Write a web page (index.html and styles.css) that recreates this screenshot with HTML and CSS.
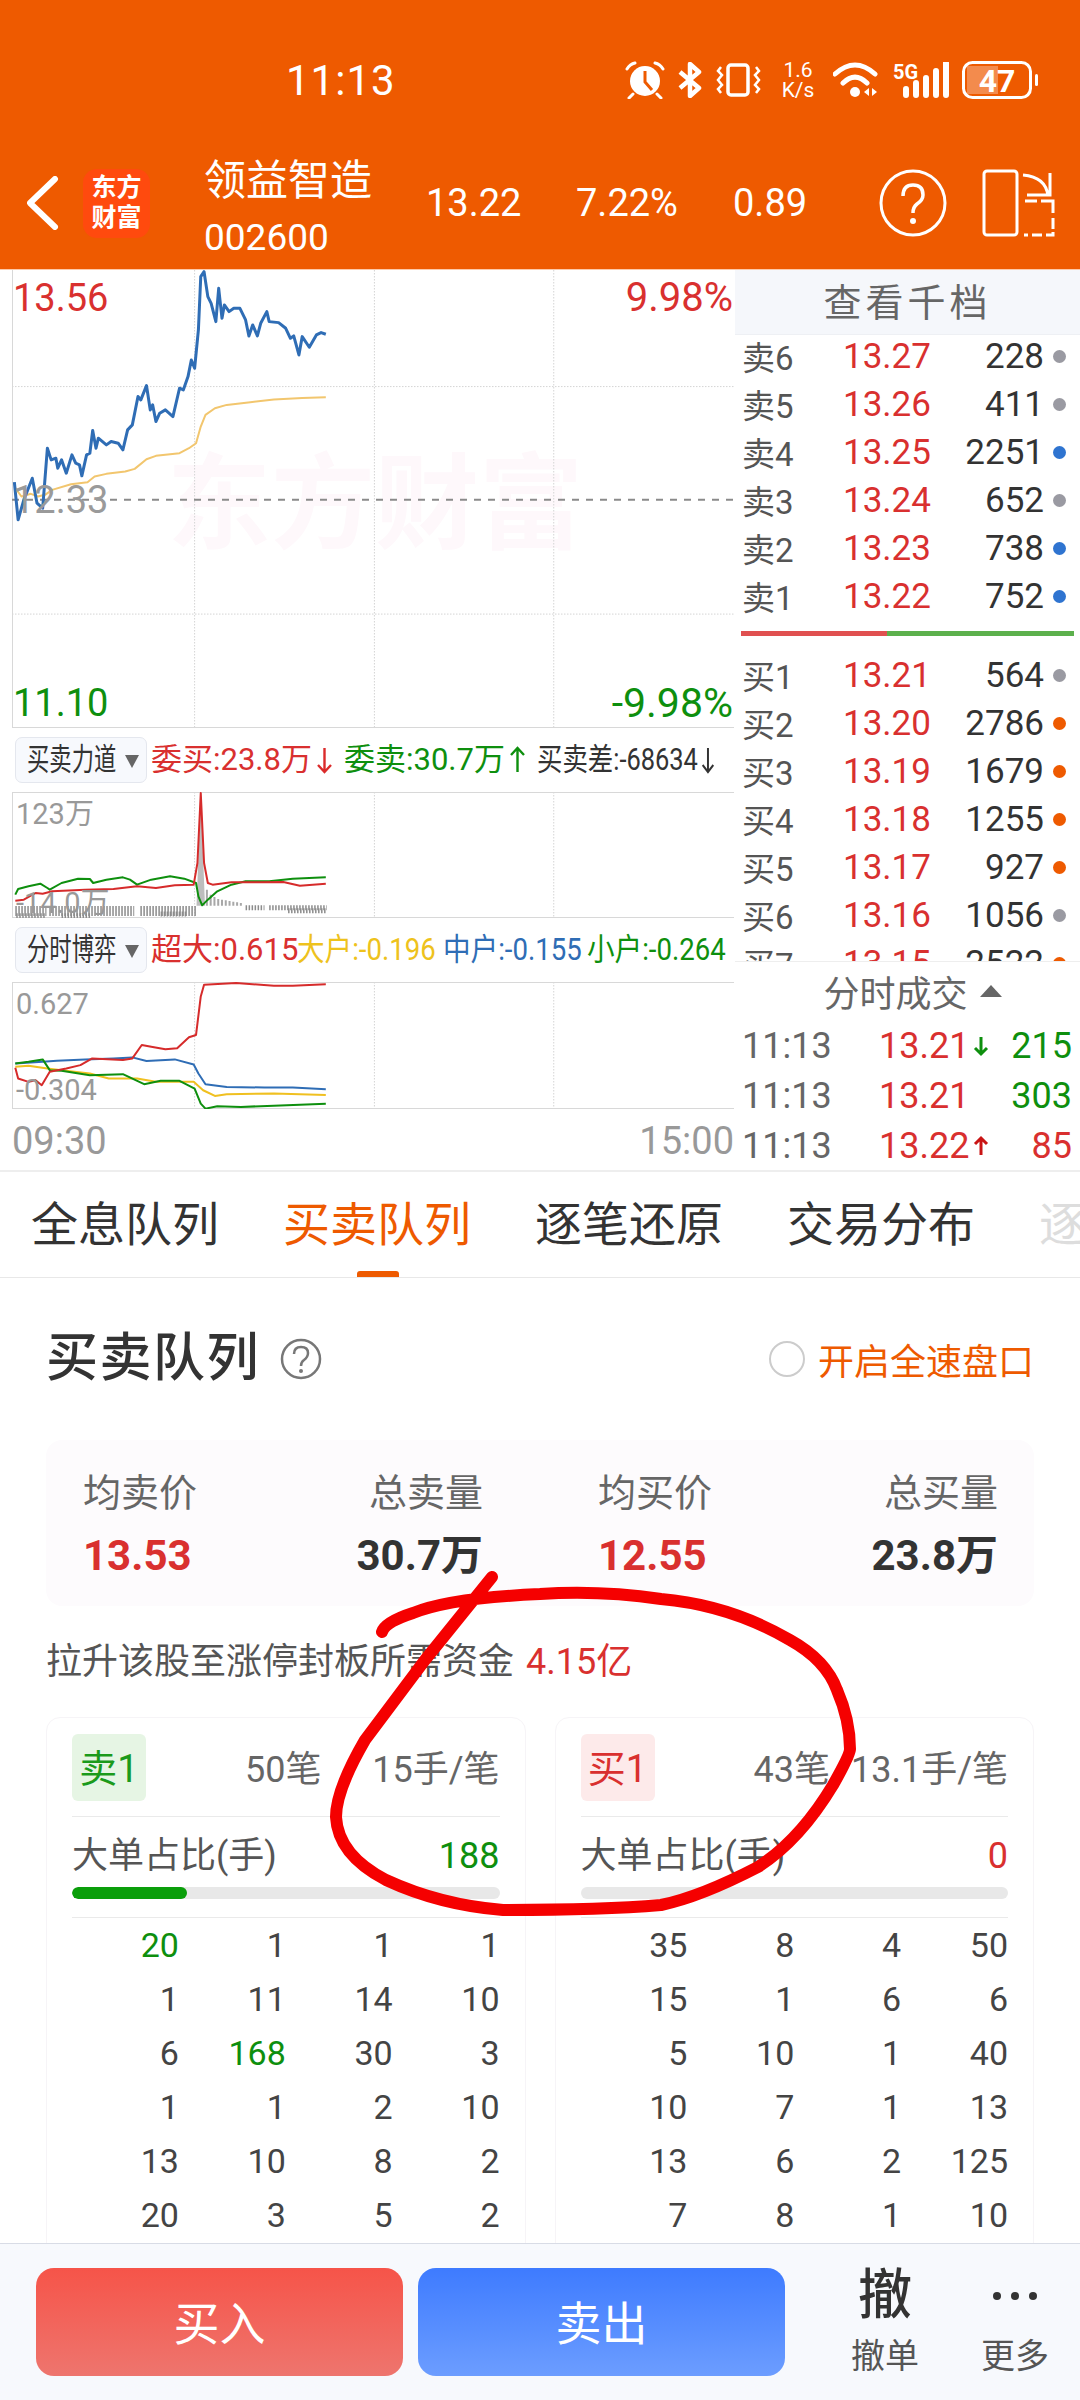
FILE: index.html
```html
<!DOCTYPE html>
<html lang="zh">
<head>
<meta charset="utf-8">
<title>领益智造</title>
<link rel="stylesheet" href="styles.css">
</head>
<body>
<header class="header">
  <div class="status">
    <span class="clock">11:13</span>
    <svg class="ic alarm" width="40" height="38" viewBox="0 0 40 38"><circle cx="20" cy="20" r="15" fill="#fff"/><path d="M20 10V21L27 29" fill="none" stroke="#ee5a00" stroke-width="3"/><path d="M2 8Q5 3 10 2M38 8Q35 3 30 2M8 33L4 37M32 33L36 37" fill="none" stroke="#fff" stroke-width="3" stroke-linecap="round"/></svg>
    <svg class="ic bt" width="24" height="36" viewBox="0 0 24 36"><path d="M2 10L21 26L12 34V2L21 10L2 26" fill="none" stroke="#fff" stroke-width="4.5" stroke-linejoin="round"/></svg>
    <svg class="ic vib" width="45" height="36" viewBox="0 0 45 36"><rect x="12" y="3" width="20" height="30" rx="3" fill="none" stroke="#fff" stroke-width="3.5"/><path d="M5 5L2 9L6 13L2 18L6 23L2 27L5 31M40 5L43 9L39 13L43 18L39 23L43 27L40 31" fill="none" stroke="#fff" stroke-width="2.5"/></svg>
    <span class="speed"><span>1.6</span><span>K/s</span></span>
    <svg class="ic wifi" width="48" height="36" viewBox="0 0 48 36"><path d="M2 12Q22-6 42 12M10 21Q22 9 34 21" fill="none" stroke="#fff" stroke-width="5" stroke-linecap="round"/><circle cx="22" cy="30" r="5" fill="#fff"/><path d="M36 26L31 30L36 34ZM39 26L44 30L39 34Z" fill="#fff"/></svg>
    <span class="net"><span class="fiveg">5G</span>
      <svg width="46" height="36" viewBox="0 0 46 36"><path d="M3 27V33M13 21V33M23 16V33M33 9V33M43 1V33" fill="none" stroke="#fff" stroke-width="6" stroke-linecap="round"/></svg>
    </span>
    <svg class="ic batt" width="76" height="38" viewBox="0 0 76 38"><rect x="5" y="5" width="31" height="28" fill="#fff" opacity=".3"/><rect x="1.5" y="1.5" width="67" height="35" rx="9" fill="none" stroke="#fff" stroke-width="3"/><rect x="73" y="13" width="3" height="12" rx="1.5" fill="#fff"/><text x="35" y="31" text-anchor="middle" class="batt-text">47</text></svg>
  </div>
  <nav class="nav">
    <svg class="back" width="32" height="54" viewBox="0 0 32 54"><path d="M28 3L3 27L28 51" fill="none" stroke="#fff" stroke-width="6" stroke-linecap="round" stroke-linejoin="round"/></svg>
    <div class="logo"><span>东方</span><span>财富</span></div>
    <div class="name-col"><div class="name">领益智造</div><div class="code">002600</div></div>
    <div class="val v1">13.22</div>
    <div class="val v2">7.22%</div>
    <div class="val v3">0.89</div>
    <svg class="help" width="68" height="68" viewBox="0 0 68 68"><circle cx="34" cy="34" r="32" fill="none" stroke="#fff" stroke-width="3"/><path d="M24 27Q24 16 34 16Q44 16 44 26Q44 31 38 35Q34 38 34 44" fill="none" stroke="#fff" stroke-width="3.5"/><circle cx="34" cy="52" r="3" fill="#fff"/></svg>
    <svg class="rotate" width="74" height="68" viewBox="0 0 74 68"><rect x="2" y="2" width="33" height="64" rx="3" fill="none" stroke="#fff" stroke-width="3"/><path d="M43 32H55M59 32H71V44M71 49V60M71 63V66H64M60 66H50M46 66H42" fill="none" stroke="#fff" stroke-width="3"/><path d="M41 6Q64 8 66 27M68 4V26H45" fill="none" stroke="#fff" stroke-width="3"/></svg>
  </nav>
</header>

<main class="main">
  <section class="quote">
    <div class="chart-col">
      <div class="price-chart">
        <svg class="plot" width="722" height="458" viewBox="25 0 1530 1375" preserveAspectRatio="none">
          <path class="grid" d="M25 350H1555M25 1033H1555M412 0V1375M793 0V1375M1173 0V1375"/>
          <path class="frame" d="M25 0V1375H1555"/>
          <path class="dash" d="M25 690H1555"/>
          <polyline class="ln org" points="32,655 45,680 65,672 80,680 95,675 110,660 150,643 185,637 200,620 225,612 265,605 285,597 310,568 330,558 380,550 400,535 415,520 425,470 435,435 455,415 480,405 530,397 580,389 640,384 690,382"/>
          <polyline class="ln blu" points="30,637 38,750 50,690 68,625 78,700 90,715 100,535 108,570 118,565 122,595 130,570 140,610 152,555 160,580 168,585 173,618 183,555 190,550 196,482 203,535 208,505 225,525 235,515 250,520 260,540 270,480 280,465 292,380 298,390 310,347 318,420 323,405 330,455 338,430 350,420 366,440 380,355 388,360 398,320 405,270 412,295 420,180 425,20 432,5 440,80 447,100 457,155 463,55 470,145 475,105 485,125 495,115 508,115 520,150 527,198 535,165 545,198 552,160 565,125 570,155 590,158 605,175 615,205 622,198 633,255 640,200 655,232 670,195 680,188 690,193"/>
        </svg>
        <div class="watermark">东方财富</div>
        <span class="lab up tl">13.56</span>
        <span class="lab up tr">9.98%</span>
        <span class="lab flat ml">12.33</span>
        <span class="lab dn bl">11.10</span>
        <span class="lab dn br">-9.98%</span>
      </div>

      <div class="legend-row">
        <div class="pick"><span class="pick-t">买卖力道</span><i class="tri"></i></div>
        <span class="lg w193 up">委买:23.8万<svg class="arr" width="17" height="30" viewBox="0 0 17 30"><path d="M8.5 3V27M2 20L8.5 27L15 20" fill="none" stroke="#db2b2b" stroke-width="2.4"/></svg></span>
        <span class="lg w193 dn">委卖:30.7万<svg class="arr" width="17" height="30" viewBox="0 0 17 30"><path d="M8.5 27V3M2 10L8.5 3L15 10" fill="none" stroke="#0e8f0e" stroke-width="2.4"/></svg></span>
        <span class="lg n84 ink">买卖差:-68634<svg class="arr" width="17" height="30" viewBox="0 0 17 30"><path d="M8.5 3V27M2 20L8.5 27L15 20" fill="none" stroke="#333" stroke-width="2.4"/></svg></span>
      </div>
      <div class="sub-chart">
        <svg class="plot" width="722" height="126" viewBox="25 187 1530 378" preserveAspectRatio="none">
          <path class="grid" d="M412 187V565M793 187V565M1173 187V565"/>
          <path class="frame" d="M1555 187H25V565H1555"/>
          <path class="bars" d="M32 544H98M104 544H284M297 544H415"/>
          <path class="bars2" d="M34 558H95M130 558H192M340 553H395M520 534H560M570 534H692M610 543H692"/>
          <path class="barv" d="M438 528V480M446 528V495M454 528V502M462 528V508M470 528V510M478 528V512M486 528V514M494 528V516M502 528V518M510 528V520"/>
          <path class="spike" d="M416 528L425 195L434 528Z"/>
          <polyline class="ln thin gre" points="32,495 38,478 60,470 85,462 100,475 105,480 130,460 165,447 190,448 197,460 225,450 260,443 275,450 290,465 320,450 360,440 390,447 415,460 420,500 428,527 440,510 460,485 490,465 520,455 570,455 620,447 690,443"/>
          <polyline class="ln thin red" points="32,513 50,510 75,490 90,492 110,485 180,480 240,478 290,470 330,475 370,467 410,465 418,400 425,190 432,400 440,460 450,465 490,458 550,458 600,457 635,468 690,462"/>
        </svg>
        <span class="axis a1">123万</span>
        <span class="axis a2">-14.0万</span>
      </div>

      <div class="legend-row">
        <div class="pick"><span class="pick-t">分时博弈</span><i class="tri"></i></div>
        <span class="lg w146 up">超大:0.615</span>
        <span class="lg w146 n90 yel">大户:-0.196</span>
        <span class="lg w144 n90 blue">中户:-0.155</span>
        <span class="lg n90 dn">小户:-0.264</span>
      </div>
      <div class="sub-chart tall">
        <svg class="plot" width="722" height="127" viewBox="25 757 1530 379" preserveAspectRatio="none">
          <path class="grid" d="M412 757V1136M793 757V1136M1173 757V1136"/>
          <path class="frame" d="M1555 757H25V1136H1555"/>
          <polyline class="ln thin yl" points="32,1010 60,1007 100,1015 130,1020 190,1030 230,1045 265,1045 290,1045 330,1055 410,1055 430,1080 455,1097 480,1092 580,1090 690,1094"/>
          <polyline class="ln thin blu" points="32,1000 90,995 120,992 180,988 240,985 280,982 310,993 370,988 410,1003 420,1030 435,1062 480,1070 560,1072 620,1072 690,1077"/>
          <polyline class="ln thin gre" points="32,1000 60,995 90,988 105,1020 130,1022 190,1035 260,1032 305,1062 340,1052 380,1052 412,1075 425,1120 435,1135 460,1128 510,1130 580,1126 690,1120"/>
          <polyline class="ln thin red" points="32,1013 38,1045 60,1055 75,1050 88,1065 105,1025 140,1015 170,1005 195,985 260,990 280,985 300,945 320,950 350,958 375,955 400,922 415,915 425,800 432,765 500,760 580,768 620,768 690,764"/>
        </svg>
        <span class="axis a3">0.627</span>
        <span class="axis a4">-0.304</span>
      </div>
      <div class="times"><span>09:30</span><span>15:00</span></div>
    </div>

    <aside class="book">
      <div class="band">查看千档</div>
      <div class="side sell">
        <div class="row"><span class="lv">卖6</span><span class="pr">13.27</span><span class="qty">228</span><i class="dot g"></i></div>
        <div class="row"><span class="lv">卖5</span><span class="pr">13.26</span><span class="qty">411</span><i class="dot g"></i></div>
        <div class="row"><span class="lv">卖4</span><span class="pr">13.25</span><span class="qty">2251</span><i class="dot b"></i></div>
        <div class="row"><span class="lv">卖3</span><span class="pr">13.24</span><span class="qty">652</span><i class="dot g"></i></div>
        <div class="row"><span class="lv">卖2</span><span class="pr">13.23</span><span class="qty">738</span><i class="dot b"></i></div>
        <div class="row"><span class="lv">卖1</span><span class="pr">13.22</span><span class="qty">752</span><i class="dot b"></i></div>
      </div>
      <div class="ratio"><i class="ratio-r"></i><i class="ratio-g"></i></div>
      <div class="side buy">
        <div class="row"><span class="lv">买1</span><span class="pr">13.21</span><span class="qty">564</span><i class="dot g"></i></div>
        <div class="row"><span class="lv">买2</span><span class="pr">13.20</span><span class="qty">2786</span><i class="dot o"></i></div>
        <div class="row"><span class="lv">买3</span><span class="pr">13.19</span><span class="qty">1679</span><i class="dot o"></i></div>
        <div class="row"><span class="lv">买4</span><span class="pr">13.18</span><span class="qty">1255</span><i class="dot o"></i></div>
        <div class="row"><span class="lv">买5</span><span class="pr">13.17</span><span class="qty">927</span><i class="dot o"></i></div>
        <div class="row"><span class="lv">买6</span><span class="pr">13.16</span><span class="qty">1056</span><i class="dot g"></i></div>
        <div class="row"><span class="lv">买7</span><span class="pr">13.15</span><span class="qty">2522</span><i class="dot o"></i></div>
      </div>
      <div class="trade-head">分时成交<i class="tri-up"></i></div>
      <div class="trade"><span class="t">11:13</span><span class="tp">13.21</span><svg class="ta" width="18" height="22" viewBox="0 0 18 22"><path d="M9 2V19M3 13L9 19L15 13" fill="none" stroke="#0e8f0e" stroke-width="3"/></svg><span class="tq dn">215</span></div>
      <div class="trade"><span class="t">11:13</span><span class="tp">13.21</span><span class="ta"></span><span class="tq dn">303</span></div>
      <div class="trade"><span class="t">11:13</span><span class="tp">13.22</span><svg class="ta" width="18" height="22" viewBox="0 0 18 22"><path d="M9 20V3M3 9L9 3L15 9" fill="none" stroke="#c91414" stroke-width="3"/></svg><span class="tq up">85</span></div>
    </aside>
  </section>

  <div class="tabs">
    <span class="tab">全息队列</span>
    <span class="tab on">买卖队列</span>
    <span class="tab">逐笔还原</span>
    <span class="tab">交易分布</span>
    <span class="tab fade">逐笔成交</span>
  </div>

  <section class="content">
    <div class="title-row">
      <h2 class="title">买卖队列</h2>
      <svg class="q" width="42" height="42" viewBox="0 0 42 42"><circle cx="21" cy="21" r="19" fill="none" stroke="#777" stroke-width="2.5"/><path d="M14 16Q14 9 21 9Q28 9 28 15Q28 19 24 22Q21 24 21 28" fill="none" stroke="#777" stroke-width="2.5"/><circle cx="21" cy="33" r="2" fill="#777"/></svg>
      <span class="radio"></span>
      <span class="fast">开启全速盘口</span>
    </div>
    <div class="summary">
      <div class="pair">
        <div><div class="s-l">均卖价</div><div class="s-v up">13.53</div></div>
        <div class="end"><div class="s-l">总卖量</div><div class="s-v">30.7万</div></div>
      </div>
      <div class="pair">
        <div><div class="s-l">均买价</div><div class="s-v up">12.55</div></div>
        <div class="end"><div class="s-l">总买量</div><div class="s-v">23.8万</div></div>
      </div>
    </div>
    <p class="fund">拉升该股至涨停封板所需资金<span class="fund-v">4.15亿</span></p>
    <div class="cards">
      <article class="card">
        <div class="c-head"><span class="tag tag-g">卖1</span><span class="st st1">50笔</span><span class="st st2">15手/笔</span></div>
        <div class="c-big"><span>大单占比(手)</span><span class="big-v dn">188</span></div>
        <div class="track"><div class="fill" style="width:27%"></div></div>
        <div class="nums">
          <span class="dn">20</span><span>1</span><span>1</span><span>1</span>
          <span>1</span><span>11</span><span>14</span><span>10</span>
          <span>6</span><span class="dn">168</span><span>30</span><span>3</span>
          <span>1</span><span>1</span><span>2</span><span>10</span>
          <span>13</span><span>10</span><span>8</span><span>2</span>
          <span>20</span><span>3</span><span>5</span><span>2</span>
        </div>
      </article>
      <article class="card">
        <div class="c-head"><span class="tag tag-r">买1</span><span class="st st1">43笔</span><span class="st st2">13.1手/笔</span></div>
        <div class="c-big"><span>大单占比(手)</span><span class="big-v up">0</span></div>
        <div class="track"></div>
        <div class="nums">
          <span>35</span><span>8</span><span>4</span><span>50</span>
          <span>15</span><span>1</span><span>6</span><span>6</span>
          <span>5</span><span>10</span><span>1</span><span>40</span>
          <span>10</span><span>7</span><span>1</span><span>13</span>
          <span>13</span><span>6</span><span>2</span><span>125</span>
          <span>7</span><span>8</span><span>1</span><span>10</span>
        </div>
      </article>
    </div>
  </section>
</main>

<footer class="footer">
  <button class="btn buy-btn">买入</button>
  <button class="btn sell-btn">卖出</button>
  <div class="act"><span class="act-big">撤</span><span class="act-l">撤单</span></div>
  <div class="act"><span class="act-dots"><i></i><i></i><i></i></span><span class="act-l">更多</span></div>
</footer>

<svg class="scribble" width="1080" height="2400" viewBox="0 0 1080 2400"><path d="M492 1577L425 1660L365 1740Q336 1790 336 1817Q338 1855 386 1880Q440 1905 503 1910Q600 1910 661 1905Q700 1897 758 1867Q800 1840 833 1785Q850 1755 850 1749Q850 1720 837 1690Q826 1660 790 1640Q730 1605 661 1599Q600 1590 540 1594Q450 1598 413 1613Q385 1622 382 1632" fill="none" stroke="#f50000" stroke-width="12" stroke-linecap="round" stroke-linejoin="round"/></svg>
</body>
</html>
```

FILE: styles.css
```css
* { box-sizing: border-box; }
html, body { margin: 0; padding: 0; }
body {
  position: relative;
  width: 1080px;
  height: 2400px;
  overflow: hidden;
  display: flex;
  flex-direction: column;
  background: #fff;
  color: #333;
  font-family: Roboto, "Noto Sans CJK SC", sans-serif;
}
svg { display: block; flex: none; }
i { display: block; font-style: normal; }

/* header */
.header { height: 270px; flex: none; background: #ee5a00; color: #fff; padding-top: 50px; border-bottom: 1px solid #fdc9a9; }
.status { height: 60px; display: flex; align-items: center; padding-left: 286px; }
.clock { font-size: 42px; width: 339px; letter-spacing: 1px; }
.bt { margin-left: 13px; }
.vib { margin-left: 14px; }
.speed { margin-left: 18px; width: 38px; display: flex; flex-direction: column; align-items: center; font-size: 21px; line-height: 20px; }
.wifi { margin-left: 16px; }
.net { margin-left: 12px; width: 56px; display: flex; align-items: flex-start; position: relative; justify-content: flex-end; }
.fiveg { position: absolute; left: 0; top: 0; font-size: 20px; line-height: 20px; font-weight: 700; }
.batt { margin-left: 13px; }
.batt-text { font: 700 32px Roboto, sans-serif; fill: #fff; }
.nav { height: 90px; margin-top: 48px; display: flex; align-items: center; padding-left: 27px; }
.logo { width: 67px; height: 69px; margin-left: 24px; background: #ff4a0e; border-radius: 14px; display: flex; flex-direction: column; align-items: center; justify-content: center; font-size: 25px; line-height: 30px; font-weight: 700; }
.name-col { align-self: flex-start; width: 222px; margin-left: 54px; padding-top: 2px; }
.name { font-size: 42px; line-height: 42px; }
.code { font-size: 37px; line-height: 42px; margin-top: 15px; }
.val { font-size: 38px; }
.v1 { width: 150px; }
.v2 { width: 157px; }
.v3 { width: 147px; }
.help { margin-right: 35px; margin-left: -1px; }

/* quote */
.main { flex: 1; min-height: 0; overflow: hidden; }
.quote { display: flex; height: 902px; border-bottom: 2px solid #eee; }
.chart-col { width: 735px; padding-left: 12px; flex: none; }
.price-chart { position: relative; width: 722px; height: 458px; }
.plot { display: block; }
.grid { fill: none; stroke: #d4d4d4; stroke-width: 1; stroke-dasharray: 1.5 1.5; vector-effect: non-scaling-stroke; }
.frame { fill: none; stroke: #d8d8d8; stroke-width: 2; vector-effect: non-scaling-stroke; }
.dash { fill: none; stroke: #8a8a8a; stroke-width: 2; stroke-dasharray: 7 7; vector-effect: non-scaling-stroke; }
.ln { fill: none; stroke-width: 3; stroke-linejoin: round; vector-effect: non-scaling-stroke; }
.thin { stroke-width: 2; }
.org { stroke: #f2c66e; stroke-width: 2; }
.blu { stroke: #2f6db5; }
.gre { stroke: #0e8f0e; }
.red { stroke: #d62b2b; }
.yl { stroke: #f0c020; }
.bars, .bars2 { fill: none; stroke: #8c8c8c; vector-effect: non-scaling-stroke; stroke-dasharray: 1.5 1.5; }
.bars { stroke-width: 10; }
.bars2 { stroke-width: 5; }
.barv { fill: none; stroke: #a8a8a8; stroke-width: 2; vector-effect: non-scaling-stroke; }
.spike { fill: #bdbdbd; stroke: none; }
.watermark { position: absolute; left: 155px; top: 184px; font-size: 104px; line-height: 104px; white-space: nowrap; color: #fef8fb; font-weight: 700; z-index: -1; }
.lab { position: absolute; font-size: 38px; line-height: 44px; }
.tl { left: 1px; top: 6px; }
.tr { right: 1px; top: 6px; font-size: 40px; }
.ml { left: 1px; top: 208px; color: #9a9a9a; }
.bl { left: 1px; top: 411px; }
.br { right: 1px; top: 411px; font-size: 41px; }
.up { color: #d9302f; }
.dn { color: #0e8f0e; }
.flat { color: #9a9a9a; }
.ink { color: #333; }
.yel { color: #eec21c; }
.blue { color: #2f6db5; }

.legend-row { height: 46px; margin-top: 9px; display: flex; align-items: center; white-space: nowrap; }
.pick { width: 132px; height: 46px; margin-left: 3px; margin-right: 4px; flex: none; background: #f7f9fd; border: 1px solid #e4e7ee; border-radius: 7px; position: relative; overflow: hidden; }
.pick-t { position: absolute; left: 11px; top: 0; font-size: 31px; line-height: 44px; transform: scaleX(.72); transform-origin: left center; }
.tri { position: absolute; left: 109px; top: 17px; width: 0; height: 0; border-left: 7px solid transparent; border-right: 7px solid transparent; border-top: 13px solid #666; }
.lg { display: flex; align-items: center; font-size: 31px; line-height: 46px; transform-origin: left center; flex: none; }
.w193 { width: 193px; }
.w146 { width: 146px; }
.w144 { width: 144px; }
.n84 { transform: scaleX(.82); }
.n90 { transform: scaleX(.89); }
.arr { margin-left: 4px; }
.sub-chart { position: relative; height: 126px; margin-top: 9px; width: 722px; }
.sub-chart.tall { height: 127px; }
.axis { position: absolute; left: 4px; font-size: 29px; line-height: 34px; color: #999; white-space: nowrap; }
.a1 { top: 5px; }
.a2 { top: 94px; }
.a3 { top: 5px; }
.a4 { top: 91px; }
.times { height: 64px; display: flex; justify-content: space-between; align-items: center; font-size: 38px; color: #999; width: 722px; }

/* book */
.book { flex: 1; min-width: 0; height: 900px; overflow: hidden; }
.band { height: 65px; background: #f5f7fb; color: #666; font-size: 38px; letter-spacing: 4px; line-height: 67px; text-align: center; border-bottom: 1px solid #eef0f4; }
.sell { margin-top: -3px; }
.row { height: 48px; display: flex; align-items: center; padding: 0 14px 0 7px; }
.lv { width: 101px; font-size: 33px; color: #555; }
.pr { color: #d9302f; font-size: 35px; }
.qty { flex: 1; text-align: right; font-size: 35px; color: #333; }
.dot { width: 13px; height: 13px; border-radius: 50%; margin-left: 9px; }
.dot.g { background: #9a9aa2; }
.dot.b { background: #2f74d0; }
.dot.o { background: #ee5a00; }
.ratio { display: flex; height: 5px; margin: 11px 6px 15px; }
.ratio-r { width: 146px; background: #e05050; }
.ratio-g { flex: 1; background: #5cb04c; }
.buy { height: 311px; overflow: hidden; border-bottom: 1px solid #eee; }
.trade-head { height: 57px; display: flex; align-items: center; justify-content: center; padding-left: 10px; font-size: 36px; color: #666; }
.tri-up { width: 0; height: 0; margin-left: 12px; border-left: 11px solid transparent; border-right: 11px solid transparent; border-bottom: 12px solid #666; }
.trade { height: 50px; display: flex; align-items: center; padding: 3px 8px 0 7px; font-size: 36px; }
.t { width: 137px; color: #666; }
.tp { width: 92px; color: #d9302f; }
.ta { width: 18px; height: 22px; margin-left: 1px; }
.tq { flex: 1; text-align: right; }

/* tabs */
.tabs { height: 106px; display: flex; gap: 65px; padding-left: 31px; border-bottom: 1px solid #e8e8e8; overflow: hidden; }
.tab { position: relative; flex: none; width: 187px; font-size: 47px; line-height: 105px; color: #333; white-space: nowrap; }
.tab.on { color: #ee5a00; }
.tab.on::after { content: ""; position: absolute; left: 74px; bottom: 0; width: 42px; height: 6px; border-radius: 3px 3px 0 0; background: #ee5a00; }
.tab.fade { color: #ddd; }

/* content */
.content { padding: 0 46px; }
.title-row { height: 60px; margin-top: 51px; display: flex; align-items: center; }
.title { margin: 0; font-size: 52px; line-height: 60px; font-weight: 500; color: #333; letter-spacing: 1.5px; }
.q { margin-left: 20px; }
.radio { width: 36px; height: 36px; margin-left: auto; border-radius: 50%; border: 2px solid #ccc; }
.fast { margin-left: 13px; margin-right: 0; font-size: 36px; color: #ee5a00; }
.summary { margin-top: 51px; height: 166px; background: #fdfbfd; border-radius: 16px; padding: 30px 36px 0 37px; display: flex; gap: 115px; }
.pair { width: 400px; display: flex; justify-content: space-between; }
.end { text-align: right; }
.s-l { font-size: 38px; line-height: 46px; color: #666; }
.s-v { font-size: 42px; line-height: 46px; margin-top: 17px; font-weight: 700; color: #333; }
.s-v.up { color: #d9302f; }
.fund { margin: 35px 0 0; font-size: 36px; line-height: 42px; color: #555; }
.fund-v { margin-left: 12px; color: #d9302f; }
.cards { display: flex; gap: 29px; margin-top: 34px; }
.card { flex: 1; height: 600px; background: #fff; border: 1px solid #f6f4f7; border-radius: 14px; padding: 16px 25px 0; }
.c-head { display: flex; align-items: center; height: 67px; }
.tag { width: 74px; height: 67px; border-radius: 6px; font-size: 38px; line-height: 70px; text-align: center; }
.tag-g { background: #e6f5e4; color: #1b9a1b; }
.tag-r { background: #fdeaea; color: #d9302f; }
.st { font-size: 36px; color: #666; text-align: right; white-space: nowrap; padding-bottom: 4px; }
.st1 { flex: 1; }
.st2 { width: 178px; }
.c-big { margin-top: 15px; padding-top: 17px; height: 61px; border-top: 1px solid #eaeaea; display: flex; justify-content: space-between; font-size: 36px; line-height: 44px; color: #555; }
.big-v { font-size: 36px; }
.track { height: 12px; margin-top: 10px; border-radius: 6px; background: #e8e8e8; overflow: hidden; }
.fill { height: 100%; background: #0a9e0a; border-radius: 6px; }
.nums { margin-top: 18px; border-top: 1px solid #eaeaea; display: grid; grid-template-columns: repeat(4, 1fr); grid-auto-rows: 54px; align-items: center; text-align: right; font-size: 34px; color: #444; }

/* footer */
.footer { height: 157px; flex: none; background: #f7f9fd; border-top: 1px solid #d8dce6; padding: 24px 0 0 36px; display: flex; align-items: flex-start; gap: 15px; position: relative; z-index: 1; }
.btn { width: 367px; height: 108px; border: 0; padding: 0 0 5px; border-radius: 18px; color: #fff; font: 46px "Noto Sans CJK SC", sans-serif; }
.buy-btn { background: linear-gradient(#f65449, #ee756e); }
.sell-btn { background: linear-gradient(#3e7bff, #6c9dff); }
.act { width: 100px; display: flex; flex-direction: column; align-items: center; color: #555; }
.act:nth-of-type(1) { margin-left: 35px; }
.act + .act { margin-left: 15px; }
.act-big { height: 56px; font-size: 54px; line-height: 56px; font-weight: 500; color: #333; }
.act-dots { height: 56px; display: flex; align-items: center; gap: 10px; }
.act-dots i { width: 8px; height: 8px; border-radius: 50%; background: #333; }
.act-l { margin-top: 10px; font-size: 34px; line-height: 44px; }
.scribble { position: absolute; left: 0; top: 0; pointer-events: none; z-index: 2; }
```
